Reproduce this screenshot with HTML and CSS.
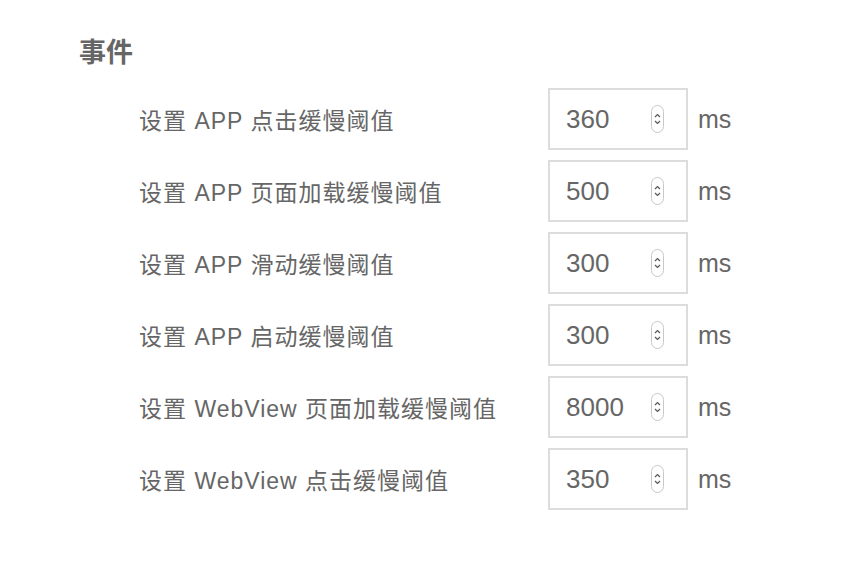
FILE: index.html
```html
<!DOCTYPE html>
<html lang="zh-CN">
<head>
    <meta charset="UTF-8">
    <title>事件</title>
    <link rel="stylesheet" href="styles.css">
</head>
<body>
    <div class="panel">
        <h2>事件</h2>
        <div class="rows">
            <div class="row">
                <span class="label">设置 APP 点击缓慢阈值</span>
                <div class="num"><span class="val">360</span><span class="spin"><svg width="13" height="28" viewBox="0 0 13 28"><rect x="0.5" y="0.5" width="12" height="27" rx="6" fill="#fff" stroke="#c8c8c8"/><path d="M4 12 L6.5 9.5 L9 12 M4 16 L6.5 18.5 L9 16" fill="none" stroke="#555" stroke-width="1.2"/></svg></span></div>
                <span class="unit">ms</span>
            </div>
            <div class="row">
                <span class="label">设置 APP 页面加载缓慢阈值</span>
                <div class="num"><span class="val">500</span><span class="spin"><svg width="13" height="28" viewBox="0 0 13 28"><rect x="0.5" y="0.5" width="12" height="27" rx="6" fill="#fff" stroke="#c8c8c8"/><path d="M4 12 L6.5 9.5 L9 12 M4 16 L6.5 18.5 L9 16" fill="none" stroke="#555" stroke-width="1.2"/></svg></span></div>
                <span class="unit">ms</span>
            </div>
            <div class="row">
                <span class="label">设置 APP 滑动缓慢阈值</span>
                <div class="num"><span class="val">300</span><span class="spin"><svg width="13" height="28" viewBox="0 0 13 28"><rect x="0.5" y="0.5" width="12" height="27" rx="6" fill="#fff" stroke="#c8c8c8"/><path d="M4 12 L6.5 9.5 L9 12 M4 16 L6.5 18.5 L9 16" fill="none" stroke="#555" stroke-width="1.2"/></svg></span></div>
                <span class="unit">ms</span>
            </div>
            <div class="row">
                <span class="label">设置 APP 启动缓慢阈值</span>
                <div class="num"><span class="val">300</span><span class="spin"><svg width="13" height="28" viewBox="0 0 13 28"><rect x="0.5" y="0.5" width="12" height="27" rx="6" fill="#fff" stroke="#c8c8c8"/><path d="M4 12 L6.5 9.5 L9 12 M4 16 L6.5 18.5 L9 16" fill="none" stroke="#555" stroke-width="1.2"/></svg></span></div>
                <span class="unit">ms</span>
            </div>
            <div class="row">
                <span class="label">设置 WebView 页面加载缓慢阈值</span>
                <div class="num"><span class="val">8000</span><span class="spin"><svg width="13" height="28" viewBox="0 0 13 28"><rect x="0.5" y="0.5" width="12" height="27" rx="6" fill="#fff" stroke="#c8c8c8"/><path d="M4 12 L6.5 9.5 L9 12 M4 16 L6.5 18.5 L9 16" fill="none" stroke="#555" stroke-width="1.2"/></svg></span></div>
                <span class="unit">ms</span>
            </div>
            <div class="row">
                <span class="label">设置 WebView 点击缓慢阈值</span>
                <div class="num"><span class="val">350</span><span class="spin"><svg width="13" height="28" viewBox="0 0 13 28"><rect x="0.5" y="0.5" width="12" height="27" rx="6" fill="#fff" stroke="#c8c8c8"/><path d="M4 12 L6.5 9.5 L9 12 M4 16 L6.5 18.5 L9 16" fill="none" stroke="#555" stroke-width="1.2"/></svg></span></div>
                <span class="unit">ms</span>
            </div>
        </div>
    </div>
</body>
</html>
```

FILE: styles.css
```css
body {
    margin: 0;
    background-color: #fff;
    font-family: 'Liberation Sans', 'Noto Sans CJK SC', sans-serif;
    color: #666;
}
.panel {
    padding: 36px 0 0 79px;
}
h2 {
    margin: 0 0 18px 0;
    font-size: 27px;
    line-height: 34px;
    font-weight: bold;
    color: #666;
}
.rows {
    padding-left: 60px;
    display: flex;
    flex-direction: column;
    gap: 10px;
}
.row {
    display: flex;
    align-items: center;
    height: 62px;
}
.label {
    width: 409px;
    font-size: 23px;
    letter-spacing: 1px;
}
.num {
    box-sizing: border-box;
    width: 140px;
    height: 62px;
    border: 2px solid #dcdcdc;
    display: flex;
    align-items: center;
    padding: 0 22px 0 16px;
}
.val {
    flex: 1;
    font-size: 26px;
    color: #666;
}
.spin {
    display: flex;
}
.unit {
    margin-left: 10px;
    font-size: 25px;
}
```
